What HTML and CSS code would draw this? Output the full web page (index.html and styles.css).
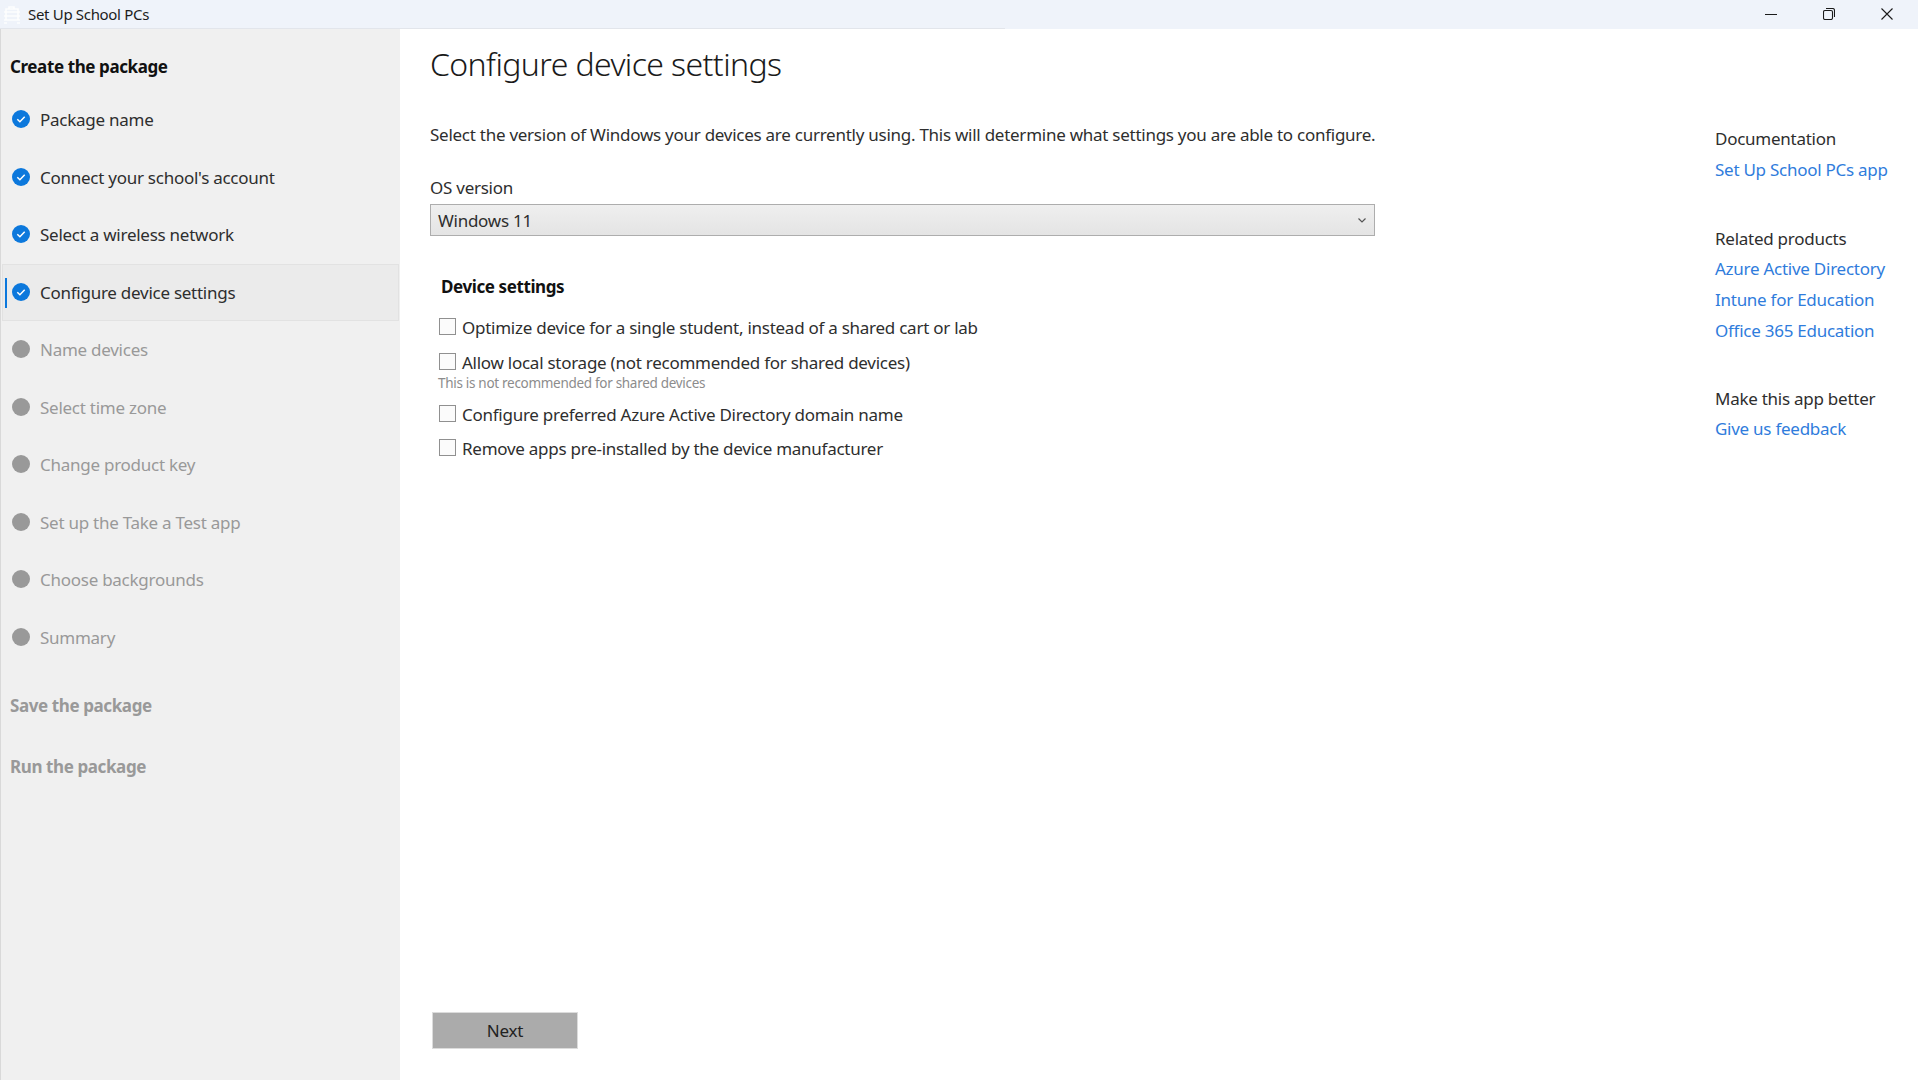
FILE: index.html
```html
<!DOCTYPE html>
<html lang="en">
<head>
<meta charset="utf-8">
<title>Set Up School PCs</title>
<link rel="stylesheet" href="styles.css">
</head>
<body>
<div class="app">
  <header class="titlebar">
    <svg class="app-icon" width="18" height="18" viewBox="0 0 18 18" fill="none" stroke="#fff" stroke-width="1.6"><path d="M6 3V1h5v2"/><path d="M1 6h16M1 10h16M1 14h16M3 3h12v11H3zM1 17h3M14 17h3"/></svg>
    <span class="app-title">Set Up School PCs</span>
    <div class="win-controls">
      <svg width="12" height="12" viewBox="0 0 12 12" stroke="#1a1a1a" fill="none"><path d="M0 6.5h12"/></svg>
      <svg width="12" height="12" viewBox="0 0 12 12" stroke="#1a1a1a" fill="none" stroke-width="1.1"><rect x="0.5" y="2.5" width="9" height="9" rx="1.5"/><path d="M3 0.5h6.5a2 2 0 0 1 2 2V9"/></svg>
      <svg width="12" height="12" viewBox="0 0 12 12" stroke="#1a1a1a" fill="none" stroke-width="1.1"><path d="M0.5 0.5l11 11M11.500 0.5l-11 11"/></svg>
    </div>
  </header>
  <div class="content">
    <nav class="sidebar">
      <h2 class="nav-head first">Create the package</h2>
      <ul class="steps">
        <li class="step done"><svg class="tick" width="18" height="18" viewBox="0 0 18 18"><circle cx="9" cy="9" r="9" fill="#0c78dc"/><path d="M5.300 9.200l2.600 2.500 4.800-5" fill="none" stroke="#fff" stroke-width="1.500"/></svg>Package name</li>
        <li class="step done"><svg class="tick" width="18" height="18" viewBox="0 0 18 18"><circle cx="9" cy="9" r="9" fill="#0c78dc"/><path d="M5.300 9.200l2.600 2.500 4.800-5" fill="none" stroke="#fff" stroke-width="1.500"/></svg>Connect your school's account</li>
        <li class="step done"><svg class="tick" width="18" height="18" viewBox="0 0 18 18"><circle cx="9" cy="9" r="9" fill="#0c78dc"/><path d="M5.300 9.200l2.600 2.500 4.800-5" fill="none" stroke="#fff" stroke-width="1.500"/></svg>Select a wireless network</li>
        <li class="step done current"><svg class="tick" width="18" height="18" viewBox="0 0 18 18"><circle cx="9" cy="9" r="9" fill="#0c78dc"/><path d="M5.300 9.200l2.600 2.500 4.800-5" fill="none" stroke="#fff" stroke-width="1.500"/></svg>Configure device settings</li>
        <li class="step todo"><span class="dot"></span>Name devices</li>
        <li class="step todo"><span class="dot"></span>Select time zone</li>
        <li class="step todo"><span class="dot"></span>Change product key</li>
        <li class="step todo"><span class="dot"></span>Set up the Take a Test app</li>
        <li class="step todo"><span class="dot"></span>Choose backgrounds</li>
        <li class="step todo"><span class="dot"></span>Summary</li>
      </ul>
      <h2 class="nav-head muted save">Save the package</h2>
      <h2 class="nav-head muted run">Run the package</h2>
    </nav>
    <main class="main">
      <h1 class="page-title">Configure device settings</h1>
      <p class="intro">Select the version of Windows your devices are currently using. This will determine what settings you are able to configure.</p>
      <div class="field-label">OS version</div>
      <div class="select"><span>Windows 11</span><svg width="8" height="5" viewBox="0 0 8 5" fill="none" stroke="#555" stroke-width="1.200"><path d="M0.500 0.500l3.500 3.500 3.500-3.500"/></svg></div>
      <h3 class="section-head">Device settings</h3>
      <div class="checks">
        <div class="check"><span class="box"></span>Optimize device for a single student, instead of a shared cart or lab</div>
        <div class="check gap-l"><span class="box"></span>Allow local storage (not recommended for shared devices)</div>
        <div class="hint">This is not recommended for shared devices</div>
        <div class="check gap-m"><span class="box"></span>Configure preferred Azure Active Directory domain name</div>
        <div class="check gap-n"><span class="box"></span>Remove apps pre-installed by the device manufacturer</div>
      </div>
      <div class="actions"><button class="next">Next</button></div>
    </main>
    <aside class="aside">
      <div class="aside-group">
        <div class="aside-head">Documentation</div>
        <a class="aside-link">Set Up School PCs app</a>
      </div>
      <div class="aside-group">
        <div class="aside-head">Related products</div>
        <a class="aside-link">Azure Active Directory</a>
        <a class="aside-link">Intune for Education</a>
        <a class="aside-link">Office 365 Education</a>
      </div>
      <div class="aside-group">
        <div class="aside-head">Make this app better</div>
        <a class="aside-link">Give us feedback</a>
      </div>
    </aside>
  </div>
</div>
</body>
</html>
```
FILE: styles.css
```css
* { box-sizing: border-box; }
html, body { margin: 0; height: 100%; background: #fff; overflow: hidden; }
body { font-family: "Noto Sans", "Open Sans", sans-serif; font-size: 17px; color: #2e2e2e; letter-spacing: -0.26px; }
.app { display: flex; flex-direction: column; height: 1080px; }
.titlebar { height: 29px; flex: none; display: flex; align-items: center; background: #eff3fa linear-gradient(#e2e5eb, #e2e5eb) no-repeat left bottom / 1005px 1px; padding-left: 3px; }
.app-icon { flex: none; opacity: .9; }
.app-title { margin-left: 7px; font-size: 15px; letter-spacing: -0.32px; color: #1c1c1c; line-height: 29px; }
.win-controls { margin-left: auto; display: flex; gap: 46px; padding-right: 25px; margin-top: -2px; }
.content { flex: 1; display: flex; min-height: 0; }
.sidebar { width: 400px; flex: none; background: #f0f0f0; border-left: 1px solid #d9d9d9; padding-top: 1px; padding-left: 0; }
.nav-head { margin: 0; font-size: 17px; font-weight: 700; line-height: 24px; padding-left: 9px; color: #111; letter-spacing: -0.4px; }
.nav-head.first { margin-top: 25px; }
.nav-head.muted { color: #999; }
.nav-head.save { margin-top: 28px; }
.nav-head.run { margin-top: 37px; }
.steps { list-style: none; margin: 12px 0 0; padding: 0; }
.step { height: 57.5px; display: flex; align-items: center; padding-left: 11px; gap: 10px; color: #2e2e2e; position: relative; }
.step.current { background: #ebebeb; margin: 0 0 0 1px; padding-left: 10px; width: 397px; box-shadow: inset 0 0 0 1px #e2e2e2; }
.step.current::before { content: ""; position: absolute; left: 3px; top: 14px; height: 30px; width: 2px; background: #0c78dc; }
.step.todo { color: #999; }
.tick { flex: none; margin-top: -1px; }
.dot { width: 18px; height: 18px; border-radius: 50%; background: #999; flex: none; margin-top: -1px; }
.main { flex: 1; min-width: 0; display: flex; flex-direction: column; padding-left: 30px; }
.page-title { margin: 13px 0 0; font-size: 32px; font-weight: 300; line-height: 44px; color: #1a1a1a; letter-spacing: -0.6px; }
.intro { margin: 37px 0 0; line-height: 24px; }
.field-label { margin-top: 29px; line-height: 24px; }
.select { margin-top: 4px; width: 945px; height: 32px; display: flex; align-items: center; justify-content: space-between; padding: 0 8px 0 7px; background: linear-gradient(#efefef, #e4e4e4); border: 1px solid #adadad; }
.section-head { margin: 39px 0 0 11px; font-size: 17px; font-weight: 700; line-height: 24px; color: #111; letter-spacing: -0.4px; }
.checks { display: flex; flex-direction: column; margin-top: 17px; padding-left: 8px; }
.check { display: flex; align-items: center; gap: 6px; line-height: 24px; padding-left: 1px; }
.check.gap-l { margin-top: 11px; }
.check.gap-m { margin-top: 11px; }
.check.gap-n { margin-top: 10px; }
.box { width: 17px; height: 17px; border: 1px solid #909090; background: #fbfbfb; flex: none; margin-top: -3px; }
.hint { font-size: 13.500px; line-height: 18px; color: #8c8c8c; margin-top: -1px; letter-spacing: -0.3px; }
.actions { margin-top: auto; padding: 0 0 31px 2px; }
.next { width: 146px; height: 37px; border: 1px solid #dcdcdc; background: #ababab; font: inherit; letter-spacing: inherit; color: #222; padding: 0; }
.aside { width: 203px; flex: none; padding-top: 98px; }
.aside-group { margin-bottom: 45px; }
.aside-group + .aside-group { margin-bottom: 44px; }
.aside-head { line-height: 24px; color: #2e2e2e; }
.aside-link { display: block; line-height: 24px; margin-top: 7px; color: #2f7cdc; }
.aside-head + .aside-link { margin-top: 6px; }
.aside-group:first-child .aside-head + .aside-link { margin-top: 7px; }
```
